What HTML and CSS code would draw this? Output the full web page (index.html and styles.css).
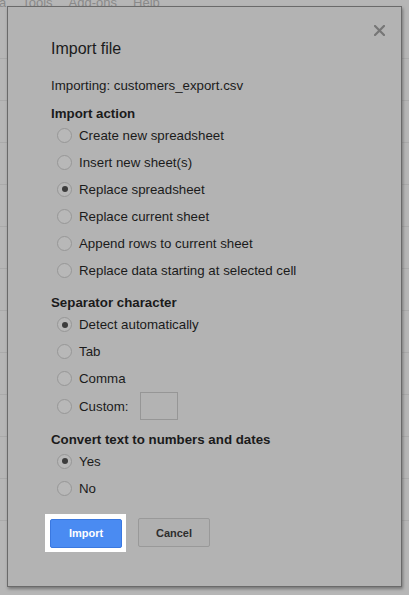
FILE: index.html
```html
<!DOCTYPE html>
<html>
<head>
<meta charset="utf-8">
<link rel="stylesheet" href="styles.css">
</head>
<body>
<div class="app">
  <div class="menubar">
    <span class="menu-item m-a">a</span>
    <span class="menu-item">Tools</span>
    <span class="menu-item">Add-ons</span>
    <span class="menu-item">Help</span>
  </div>
  <div class="grid">
    <div class="gridline"></div><div class="gridline"></div><div class="gridline"></div><div class="gridline"></div>
    <div class="gridline"></div><div class="gridline"></div><div class="gridline"></div><div class="gridline"></div>
    <div class="gridline"></div><div class="gridline"></div><div class="gridline"></div><div class="gridline"></div>
  </div>
</div>

<div class="dialog">
  <svg class="close" width="11" height="11" viewBox="0 0 11 11"><path d="M1 1 L10 10 M10 1 L1 10" stroke="#767676" stroke-width="2.2" stroke-linecap="square"/></svg>
  <div class="title">Import file</div>
  <div class="file">Importing: customers_export.csv</div>

  <div class="heading">Import action</div>
  <div class="options">
    <label class="row"><span class="radio"></span>Create new spreadsheet</label>
    <label class="row"><span class="radio"></span>Insert new sheet(s)</label>
    <label class="row"><span class="radio checked"></span>Replace spreadsheet</label>
    <label class="row"><span class="radio"></span>Replace current sheet</label>
    <label class="row"><span class="radio"></span>Append rows to current sheet</label>
    <label class="row"><span class="radio"></span>Replace data starting at selected cell</label>
  </div>

  <div class="heading">Separator character</div>
  <div class="options">
    <label class="row"><span class="radio checked"></span>Detect automatically</label>
    <label class="row"><span class="radio"></span>Tab</label>
    <label class="row"><span class="radio"></span>Comma</label>
    <label class="row row-custom"><span class="radio"></span>Custom:<span class="custom-box"></span></label>
  </div>

  <div class="heading">Convert text to numbers and dates</div>
  <div class="options">
    <label class="row"><span class="radio checked"></span>Yes</label>
    <label class="row"><span class="radio"></span>No</label>
  </div>

  <div class="buttons">
    <span class="focus-frame"><button class="btn btn-primary">Import</button></span>
    <button class="btn btn-cancel">Cancel</button>
  </div>
</div>
</body>
</html>
```

FILE: styles.css
```css
html, body {
  margin: 0;
  padding: 0;
}
body {
  width: 409px;
  height: 595px;
  overflow: hidden;
  background: #b6b6b6;
  font-family: "Liberation Sans", Arial, sans-serif;
  position: relative;
}
.app {
  height: 595px;
}
.menubar {
  display: flex;
  height: 8px;
  overflow: hidden;
}
.menu-item {
  font-size: 13px;
  line-height: 13px;
  color: #8a8a8a;
  margin-top: -4px;
  margin-right: 16px;
}
.m-a {
  margin-left: -1px;
}
.grid {
  display: flex;
  flex-direction: column;
  gap: 41px;
  padding-top: 50px;
}
.gridline {
  height: 1px;
  background: #aaaaaa;
}

.dialog {
  position: absolute;
  left: 7px;
  top: 6px;
  width: 395px;
  height: 581px;
  box-sizing: border-box;
  border: 1px solid #6a6a6a;
  background: #b3b3b3;
  box-shadow: 1px 2px 3px rgba(0,0,0,0.35);
  padding: 32px 0 0 43px;
  color: #1b1b1b;
}
.close {
  position: absolute;
  right: 16px;
  top: 18px;
}
.title {
  font-size: 16px;
  line-height: 20px;
}
.file {
  font-size: 13.3px;
  line-height: 16px;
  margin-top: 19px;
}
.heading {
  font-size: 13.3px;
  line-height: 16px;
  font-weight: bold;
  margin-top: 11.5px;
}
.options {
  display: flex;
  flex-direction: column;
}
.row {
  display: flex;
  align-items: center;
  height: 27px;
  font-size: 13.3px;
  padding-left: 6px;
}
.row-custom {
  height: 28px;
}
.radio {
  width: 13px;
  height: 13px;
  border: 1px solid #979797;
  border-radius: 50%;
  background: #b8b8b8;
  margin-right: 7px;
  display: flex;
  align-items: center;
  justify-content: center;
  flex: none;
}
.radio.checked::after {
  content: "";
  width: 6px;
  height: 6px;
  border-radius: 50%;
  background: #3c3c3c;
}
.custom-box {
  width: 36px;
  height: 26px;
  border: 1px solid #969696;
  margin-left: 11px;
}
.buttons {
  display: flex;
  align-items: center;
  margin-top: 12px;
  margin-left: -6px;
}
.focus-frame {
  display: flex;
  background: #ffffff;
  padding: 5px 4px 4px 5px;
}
.btn {
  font-family: "Liberation Sans", Arial, sans-serif;
  font-size: 11px;
  font-weight: bold;
  height: 29px;
  width: 72px;
  border-radius: 2px;
  padding: 0;
  margin: 0;
}
.btn-primary {
  background: #4a8bf2;
  border: 1px solid #3a78e0;
  color: #ffffff;
}
.btn-cancel {
  background: #b0b0b0;
  border: 1px solid #999999;
  color: #2e2e2e;
  margin-left: 12px;
}
```
